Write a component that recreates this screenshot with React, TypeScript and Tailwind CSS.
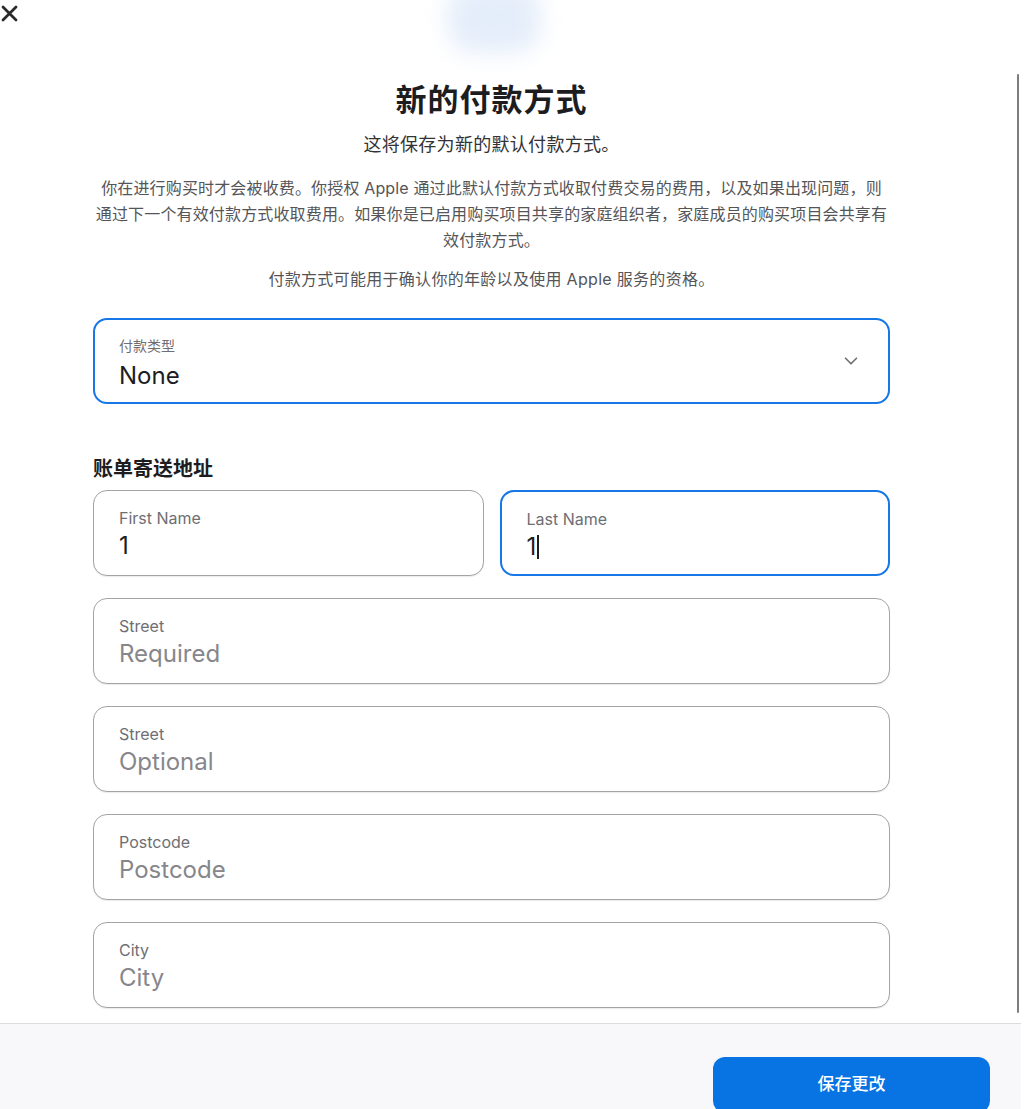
import { ChevronDown } from "lucide-react";

const font = "font-['Inter','Noto_Sans_CJK_SC',sans-serif]";

type FieldProps = {
  label: string;
  value: string;
  placeholder?: boolean;
  focused?: boolean;
  caret?: boolean;
};

const Field = ({ label, value, placeholder, focused, caret }: FieldProps) => (
  <div
    className={`h-[86px] rounded-[14px] bg-white px-[25px] pt-[17px] ${
      focused ? "border-2 border-[#1677e6] px-[24px] pt-[16px]" : "border border-[#a3a3a8] shadow-[0_1px_1px_rgba(0,0,0,0.08)]"
    }`}
  >
    <div className="text-[16px] leading-[20px] text-[#6e6e73]">{label}</div>
    <div className={`mt-[3px] flex items-center text-[24px] leading-[30px] ${placeholder ? "text-[#86868b]" : "text-[#1d1d1f]"}`}>
      {value}
      {caret && <span className="ml-[1px] inline-block h-[24px] w-[2px] bg-[#1d1d1f]" />}
    </div>
  </div>
);

export default function App() {
  return (
    <div className={`${font} flex h-[1109px] w-[1030px] overflow-hidden bg-white`}>
      <div className="flex w-[1021px] flex-col">
        <div className="relative h-[1023px] shrink-0 overflow-hidden bg-white">
          {/* close button */}
          <button className="absolute left-[1px] top-[5px] text-[#2a2a2c]">
            <svg width="17" height="17" viewBox="0 0 17 17" fill="none" stroke="currentColor" strokeWidth="2.8" strokeLinecap="round">
              <path d="M2 2 15 15M15 2 2 15" />
            </svg>
          </button>

          {/* blurred logo peeking from the top */}
          <div className="absolute left-[448px] top-[-16px] h-[68px] w-[92px] rounded-[24px] bg-[#e4edfa] blur-[12px]" />

          {/* scrollbar */}
          <div className="absolute right-[2px] top-[74px] h-[939px] w-[2px] rounded-full bg-[#7d7d80]" />

          <div className="ml-[93px] w-[797px] pt-[80px]">
            <h1 className="text-center text-[31px] font-semibold leading-[40px] tracking-[1px] text-[#1d1d1f]">新的付款方式</h1>
            <p className="mt-[12px] text-center text-[18px] leading-[26px] tracking-[0.3px] text-[#333336]">这将保存为新的默认付款方式。</p>
            <p className="mt-[17px] text-center text-[16px] leading-[26px] tracking-[0.15px] text-[#555558]">
              你在进行购买时才会被收费。你授权 Apple 通过此默认付款方式收取付费交易的费用，以及如果出现问题，则
              <br />
              通过下一个有效付款方式收取费用。如果你是已启用购买项目共享的家庭组织者，家庭成员的购买项目会共享有
              <br />
              效付款方式。
            </p>
            <p className="mt-[13px] text-center text-[16px] leading-[26px] tracking-[0.3px] text-[#555558]">
              付款方式可能用于确认你的年龄以及使用 Apple 服务的资格。
            </p>

            <div className="mt-[26px] flex h-[86px] items-center rounded-[14px] border-2 border-[#1677e6] pl-[24px] pr-[26px]">
              <div className="flex-1 pt-[5px]">
                <div className="text-[14px] leading-[18px] text-[#6e6e73]">付款类型</div>
                <div className="mt-[6px] text-[24px] leading-[30px] text-[#1d1d1f]">None</div>
              </div>
              <ChevronDown size={22} strokeWidth={1.8} className="text-[#6e6e73]" />
            </div>

            <h2 className="mt-[51px] text-[20px] font-semibold leading-[28px] text-[#1d1d1f]">账单寄送地址</h2>

            <div className="mt-[7px] flex flex-col gap-[22px]">
              <div className="grid grid-cols-2 gap-[16px]">
                <Field label="First Name" value="1" />
                <Field label="Last Name" value="1" focused caret />
              </div>
              <Field label="Street" value="Required" placeholder />
              <Field label="Street" value="Optional" placeholder />
              <Field label="Postcode" value="Postcode" placeholder />
              <Field label="City" value="City" placeholder />
            </div>
          </div>
        </div>

        <div className="flex flex-1 justify-end border-t border-[#dcdce0] bg-[#f8f8fa] pr-[31px] pt-[33px]">
          <button className="h-[56px] w-[277px] shrink-0 rounded-[12px] bg-[#0873e2] text-[17px] font-medium text-white">
            保存更改
          </button>
        </div>
      </div>
      <div className="flex-1 bg-white" />
    </div>
  );
}
